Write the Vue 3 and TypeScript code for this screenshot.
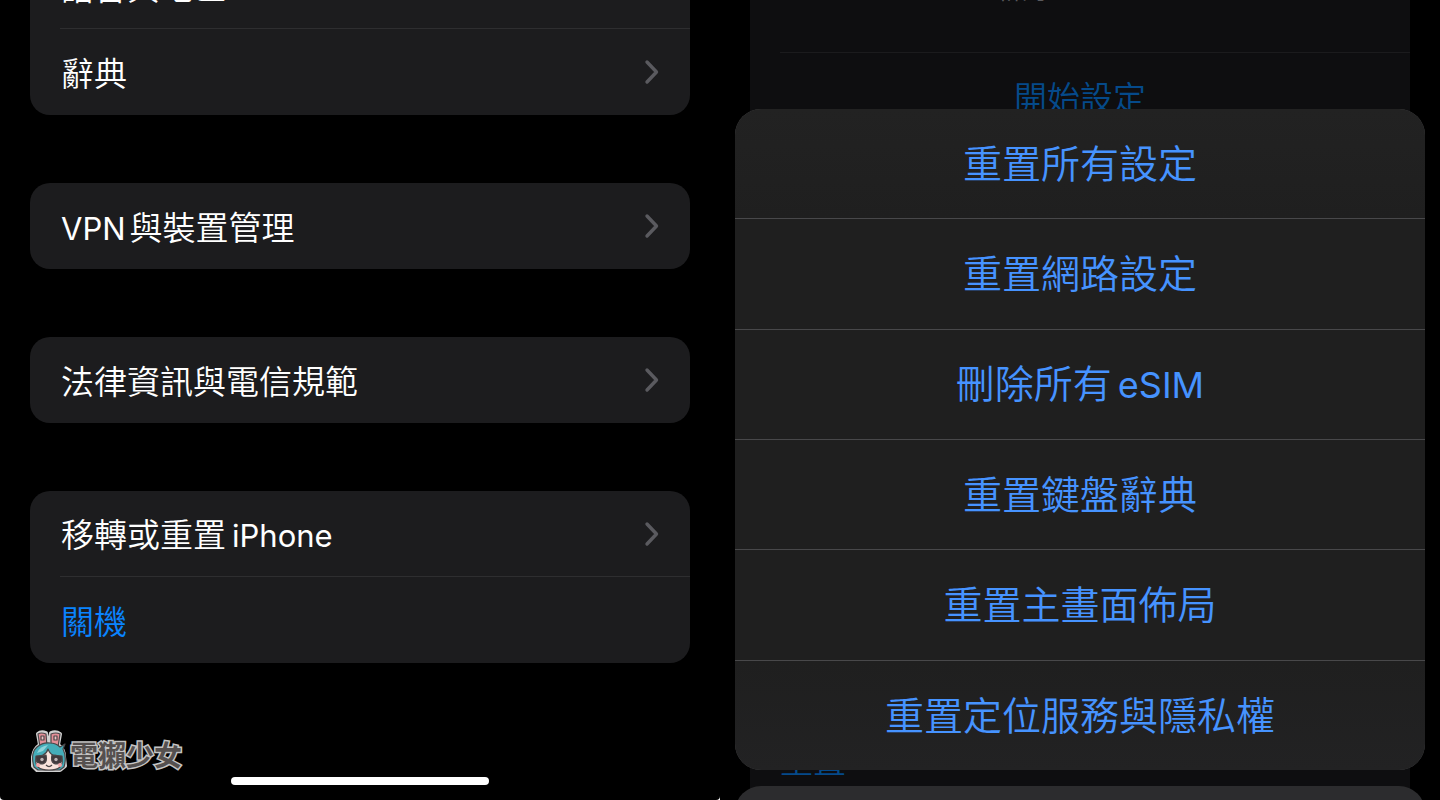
<script setup lang="ts">
interface Row {
  label: string
  lead?: string
  tail?: string
  action?: boolean
}

interface Option {
  label: string
  tail?: string
}

const groups: Row[][] = [
  [{ label: '語言與地區' }, { label: '辭典' }],
  [{ lead: 'VPN', label: '與裝置管理' }],
  [{ label: '法律資訊與電信規範' }],
  [{ label: '移轉或重置', tail: 'iPhone' }, { label: '關機', action: true }],
]

const options: Option[] = [
  { label: '重置所有設定' },
  { label: '重置網路設定' },
  { label: '刪除所有', tail: 'eSIM' },
  { label: '重置鍵盤辭典' },
  { label: '重置主畫面佈局' },
  { label: '重置定位服務與隱私權' },
]
</script>

<template>
  <main class="page">
    <section class="screen settings">
      <ul v-for="(group, g) in groups" :key="g" class="group">
        <li v-for="row in group" :key="row.label">
          <button type="button" class="row" :class="{ action: row.action }">
            <span><span v-if="row.lead" class="latin lead">{{ row.lead }}</span>{{ row.label }}<span v-if="row.tail" class="latin tail">{{ row.tail }}</span></span>
            <svg v-if="!row.action" class="chevron" viewBox="0 0 16 26" aria-hidden="true">
              <path d="M3 3 L12.5 13 L3 23" />
            </svg>
          </button>
        </li>
      </ul>
      <footer class="footer">
        <div class="brand">
          <svg class="mascot" viewBox="4 6 38 46" aria-hidden="true">
            <path class="halo" d="M12 9 Q15 6 20 8 L22 19 L24 19 L25 8 Q30 6 34 9 L32 20 Q38 24 38 32 L39 41 L34 45 H11 L7 41 L7 32 Q8 24 14 20 Z" />
            <path class="ear" d="M12 9 Q15 7 20 9 L21 22 H14 Z" />
            <path class="ear" d="M25 9 Q30 7 34 9 L32 22 H25 Z" />
            <rect class="patch" x="15" y="11" width="3" height="4" />
            <rect class="patch" x="28" y="11" width="3" height="4" />
            <path class="hair" d="M8 42 Q4 28 11 22 Q17 17 24 18 Q30 18 34 22 L39 19 L37 24 Q41 32 38 42 L34 45 H12 Z" />
            <path class="hair-light" d="M11 28 Q14 21 22 20 L17 26 Z" />
            <path class="face" d="M10 34 Q13 31 17 30 Q21 28 22 24 Q24 29 27 30 Q33 30 36 34 Q38 45 23 45 Q8 45 10 34 Z" />
            <path class="eye" d="M10 31 L20 30 Q22 39 15 39 Q9 38 10 31 Z" />
            <path class="eye" d="M26 30 L36 31 Q37 38 31 39 Q24 39 26 30 Z" />
            <circle class="shine" cx="16" cy="34.5" r="1.7" />
            <circle class="shine" cx="30" cy="34.5" r="1.7" />
            <circle class="cheek" cx="12" cy="40" r="2" />
            <circle class="cheek" cx="34" cy="40" r="2" />
            <path class="smile" d="M20 40 Q23 43 26 40" />
          </svg>
          <span class="brand-name">電獺少女</span>
        </div>
        <div class="home-bar"></div>
      </footer>
    </section>

    <section class="screen reset">
      <div class="backdrop">
        <p class="note">新的 iPhone。</p>
        <button type="button" class="start">開始設定</button>
        <button type="button" class="reset-link">重置</button>
      </div>
      <div class="sheet" role="dialog" aria-label="重置">
        <div class="options">
          <button v-for="option in options" :key="option.label" type="button" class="option">
            {{ option.label }}<span v-if="option.tail" class="latin tail">{{ option.tail }}</span>
          </button>
        </div>
        <div class="cancel"></div>
      </div>
    </section>
  </main>
</template>

<style>
body {
  margin: 0;
  background: #000;
}
</style>

<style scoped>
.page {
  display: grid;
  grid-template-columns: 1fr 1fr;
  height: 100vh;
  overflow: hidden;
  background: #fff;
  font-family: Inter, "Noto Sans CJK TC", sans-serif;
  font-weight: 350;
  color: #fff;
}

button {
  margin: 0;
  padding: 0;
  border: 0;
  background: none;
  color: inherit;
  font: inherit;
}

.screen {
  position: relative;
  min-width: 0;
  min-height: 0;
  overflow: hidden;
  background: #000;
}

.settings {
  display: flex;
  flex-direction: column;
  justify-content: flex-end;
  gap: 68px;
  padding: 0 30px;
  border-radius: 0 0 4px 4px;
}

.group {
  flex: none;
  margin: 0;
  padding: 0;
  list-style: none;
  border-radius: 20px;
  background: #1c1c1e;
}

.group li {
  padding-left: 30px;
}

.row {
  display: flex;
  align-items: center;
  justify-content: space-between;
  box-sizing: border-box;
  width: 100%;
  height: 86px;
  padding: 4px 30px 0 1px;
  font-size: 33px;
  line-height: 48px;
  text-align: left;
}

.group li:not(:last-child) .row {
  border-bottom: 1px solid #2e2e30;
}

.latin {
  font-weight: 400;
}

.row .latin {
  font-size: 31px;
}

.option .latin {
  font-size: 36px;
}

.lead {
  margin-right: 4px;
}

.tail {
  margin-left: 6px;
}

.action {
  color: #0a84ff;
}

.chevron {
  width: 16px;
  height: 26px;
  margin-bottom: 4px;
  fill: none;
  stroke: #5a5a5f;
  stroke-width: 3.4;
  stroke-linecap: round;
  stroke-linejoin: round;
}

.footer {
  display: flex;
  flex-direction: column;
  justify-content: flex-end;
  flex: none;
  box-sizing: border-box;
  height: 69px;
  padding-bottom: 15px;
}

.brand {
  display: flex;
  align-items: center;
  gap: 2px;
  height: 46px;
}

.mascot {
  width: 38px;
  height: 46px;
  overflow: visible;
  stroke: #4a4648;
  stroke-width: 1.2;
  stroke-linejoin: round;
}

.halo {
  fill: #d0d0d0;
  stroke: #d0d0d0;
  stroke-width: 4;
}

.ear {
  fill: #e58f98;
}

.patch {
  fill: #f0c4c6;
}

.hair {
  fill: #45adb9;
}

.hair-light {
  fill: #8fd3da;
  stroke: none;
}

.face {
  fill: #f8e3dc;
}

.eye {
  fill: #40393c;
}

.shine {
  fill: #bdb4b6;
  stroke: none;
}

.cheek {
  fill: #f2a5a8;
  stroke: none;
}

.smile {
  fill: none;
}

.brand-name {
  padding-top: 4px;
  font-size: 28px;
  line-height: 40px;
  font-weight: 700;
  color: #55504f;
  -webkit-text-stroke: 3px #c4c4c4;
  paint-order: stroke fill;
}

.home-bar {
  align-self: center;
  width: 258px;
  height: 9px;
  border-radius: 5px;
  background: #fff;
}

.backdrop {
  display: flex;
  flex-direction: column;
  box-sizing: border-box;
  height: 100%;
  margin: 0 30px;
  padding-left: 30px;
  background: #0e0e10;
  font-size: 33px;
  line-height: 48px;
}

.note {
  flex: none;
  height: 80px;
  margin: -28px 0 0;
  padding-right: 30px;
  border-bottom: 1px solid #1b1b1d;
  color: #5a5a5e;
  font-size: 26px;
  line-height: 36px;
  text-align: center;
}

.start {
  flex: none;
  height: 86px;
  margin-right: 30px;
  padding-top: 3px;
  color: #054a8a;
}

.reset-link {
  margin-top: auto;
  margin-bottom: 15px;
  text-align: left;
  color: #054a8a;
}

.sheet {
  position: absolute;
  inset: 109px 15px 0 15px;
  display: grid;
  grid-template-rows: 1fr 14px;
  gap: 16px;
}

.options {
  display: grid;
  grid-auto-rows: 1fr;
  gap: 1px;
  overflow: hidden;
  border-radius: 26px;
  background: #48484a;
}

.option {
  padding-top: 1px;
  background: #1f1f1f;
  color: #4693ff;
  font-size: 39px;
  line-height: 56px;
}

.option:first-child {
  background: linear-gradient(#222, #1f1f1f);
}

.option:last-child {
  background: linear-gradient(#1f1f1f, #222223);
}

.cancel {
  height: 110px;
  border-radius: 26px;
  background: #2c2c2e;
}
</style>
